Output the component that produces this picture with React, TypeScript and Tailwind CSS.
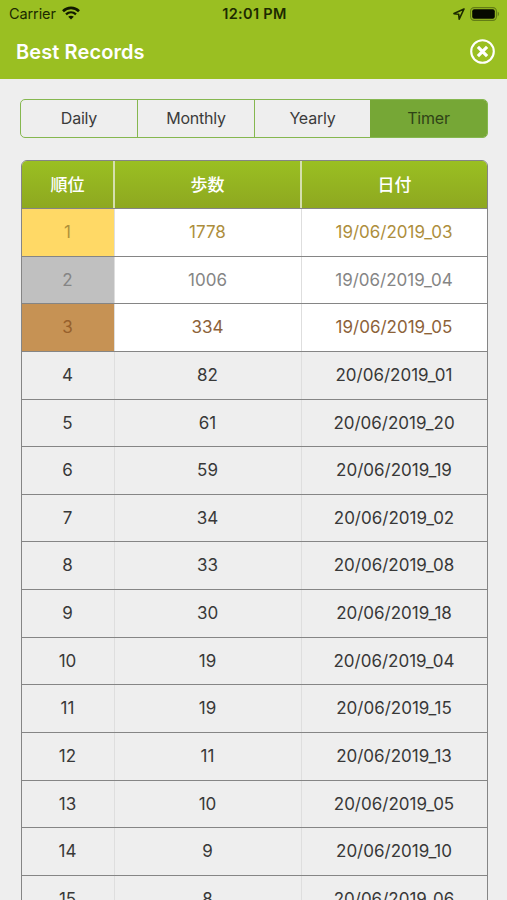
import clsx from 'clsx';

const TABS = ['Daily', 'Monthly', 'Yearly', 'Timer'];

const RECORDS = [
  { steps: 1778, date: '19/06/2019_03' },
  { steps: 1006, date: '19/06/2019_04' },
  { steps: 334, date: '19/06/2019_05' },
  { steps: 82, date: '20/06/2019_01' },
  { steps: 61, date: '20/06/2019_20' },
  { steps: 59, date: '20/06/2019_19' },
  { steps: 34, date: '20/06/2019_02' },
  { steps: 33, date: '20/06/2019_08' },
  { steps: 30, date: '20/06/2019_18' },
  { steps: 19, date: '20/06/2019_04' },
  { steps: 19, date: '20/06/2019_15' },
  { steps: 11, date: '20/06/2019_13' },
  { steps: 10, date: '20/06/2019_05' },
  { steps: 9, date: '20/06/2019_10' },
  { steps: 8, date: '20/06/2019_06' },
];

// Gold, silver and bronze for the first three places.
const MEDALS = [
  { row: 'bg-white text-[#ad8e3c]', rank: 'bg-[#ffd966] text-[#b0913a]' },
  { row: 'bg-white text-[#858585]', rank: 'bg-[#c0c0c0] text-[#858585]' },
  { row: 'bg-white text-[#8c6239]', rank: 'bg-[#c69254] text-[#96602c]' },
];

const COLUMNS = 'grid grid-cols-[93px_187px_1fr]';

function WifiIcon() {
  return (
    <svg className="mb-[2px] h-[14px] w-[18px]" viewBox="0 0 18 14" fill="none" stroke="#111a00" strokeWidth="2.6">
      <path d="M1 5.2C5.5 .8 12.5 .8 17 5.2" />
      <path d="M4 8.4c2.9-2.7 7.1-2.7 10 0" strokeWidth="2.3" />
      <path d="M9 13.6 6.2 10.8c1.6-1.4 4-1.4 5.6 0z" fill="#111a00" stroke="none" />
    </svg>
  );
}

function LocationIcon() {
  return (
    <svg className="h-[12px] w-[12px]" viewBox="0 0 12 12" fill="none" stroke="#1c2a00" strokeWidth="1.6" strokeLinejoin="round">
      <path d="M11 1 1 5.6l4.7.7.5 4.9z" />
    </svg>
  );
}

function BatteryIcon() {
  return (
    <svg className="mb-px h-[14px] w-[30px]" viewBox="0 0 30 14">
      <rect x=".6" y=".6" width="25.8" height="12.8" rx="3.6" fill="none" stroke="#637d16" strokeWidth="1.1" />
      <rect x="2.2" y="2.2" width="22.6" height="9.6" rx="2" fill="#060a00" />
      <path d="M27.7 4.6c1.8.8 1.8 4 0 4.8z" fill="#637d16" />
    </svg>
  );
}

function CloseIcon() {
  return (
    <svg className="h-[26px] w-[26px]" viewBox="0 0 26 26" fill="none" stroke="#fff">
      <circle cx="12.5" cy="12.5" r="11.3" strokeWidth="2.1" />
      <path d="m7.9 7.9 9.2 9.2M17.1 7.9l-9.2 9.2" strokeWidth="3.2" />
    </svg>
  );
}

function StatusBar() {
  return (
    <div className="grid h-7 grid-cols-3 items-center pr-[7px] pl-[9px] text-[14.5px] text-[#1c2a00]">
      <div className="flex items-center gap-[6px]">
        <span className="tracking-[-0.1px]">Carrier</span>
        <WifiIcon />
      </div>
      <span className="text-center font-semibold tracking-[0.3px] whitespace-nowrap">12:01 PM</span>
      <div className="flex items-center justify-end gap-[5px]">
        <LocationIcon />
        <BatteryIcon />
      </div>
    </div>
  );
}

function SegmentedControl() {
  return (
    <div className="grid h-[39px] grid-cols-[117px_117px_115px_1fr] overflow-hidden rounded-[5px] border-[1.5px] border-[#85b74f]">
      {TABS.map((tab, i) => (
        <button
          key={tab}
          className={clsx(
            'pb-[2px] text-[16px] tracking-[-0.2px]',
            i < 2 && 'border-r border-[#85b74f]',
            tab === 'Timer' ? 'bg-[#76a736] text-[#2f4316]' : 'text-[#3b3b3b]',
          )}
        >
          {tab}
        </button>
      ))}
    </div>
  );
}

function RecordsTable() {
  return (
    <div className="ml-px overflow-hidden rounded-t-[6px] border border-[#858585] text-[17px]">
      <div
        className={clsx(
          COLUMNS,
          'h-[47px] bg-linear-to-b from-[#9abf22] to-[#8ea820] font-["Noto_Sans_CJK_JP",sans-serif] font-medium text-white',
        )}
      >
        {['順位', '歩数', '日付'].map((title, i) => (
          <div
            key={title}
            className={clsx('flex items-center justify-center pb-[2px]', i < 2 && 'border-r-2 border-[#d5dfae]')}
          >
            {title}
          </div>
        ))}
      </div>
      {RECORDS.map((record, i) => {
        const medal = MEDALS[i];
        return (
          <div
            key={record.date}
            className={clsx(COLUMNS, 'h-[47.64px] border-t border-[#858585]', medal ? medal.row : 'text-[#383838]')}
          >
            <div className={clsx('flex items-center justify-center border-r border-[#dedede] pt-px pr-px', medal?.rank)}>
              {i + 1}
            </div>
            <div className="flex items-center justify-center border-r border-[#dedede] pt-px pr-px">{record.steps}</div>
            <div className="flex items-center justify-center pt-px pr-px">{record.date}</div>
          </div>
        );
      })}
    </div>
  );
}

export default function App() {
  return (
    <div className="h-[900px] w-[507px] overflow-hidden bg-[#eeeeee] font-[Inter,sans-serif]">
      <header className="h-[79px] bg-[#9abf22]">
        <StatusBar />
        <div className="flex h-[47px] items-center justify-between pr-[11px] pl-4">
          <h1 className="text-[20px] font-semibold tracking-[0.1px] text-white">Best Records</h1>
          <button aria-label="Close">
            <CloseIcon />
          </button>
        </div>
      </header>
      <main className="flex flex-col gap-[22px] pt-5 pr-[19px] pl-5">
        <SegmentedControl />
        <RecordsTable />
      </main>
    </div>
  );
}
